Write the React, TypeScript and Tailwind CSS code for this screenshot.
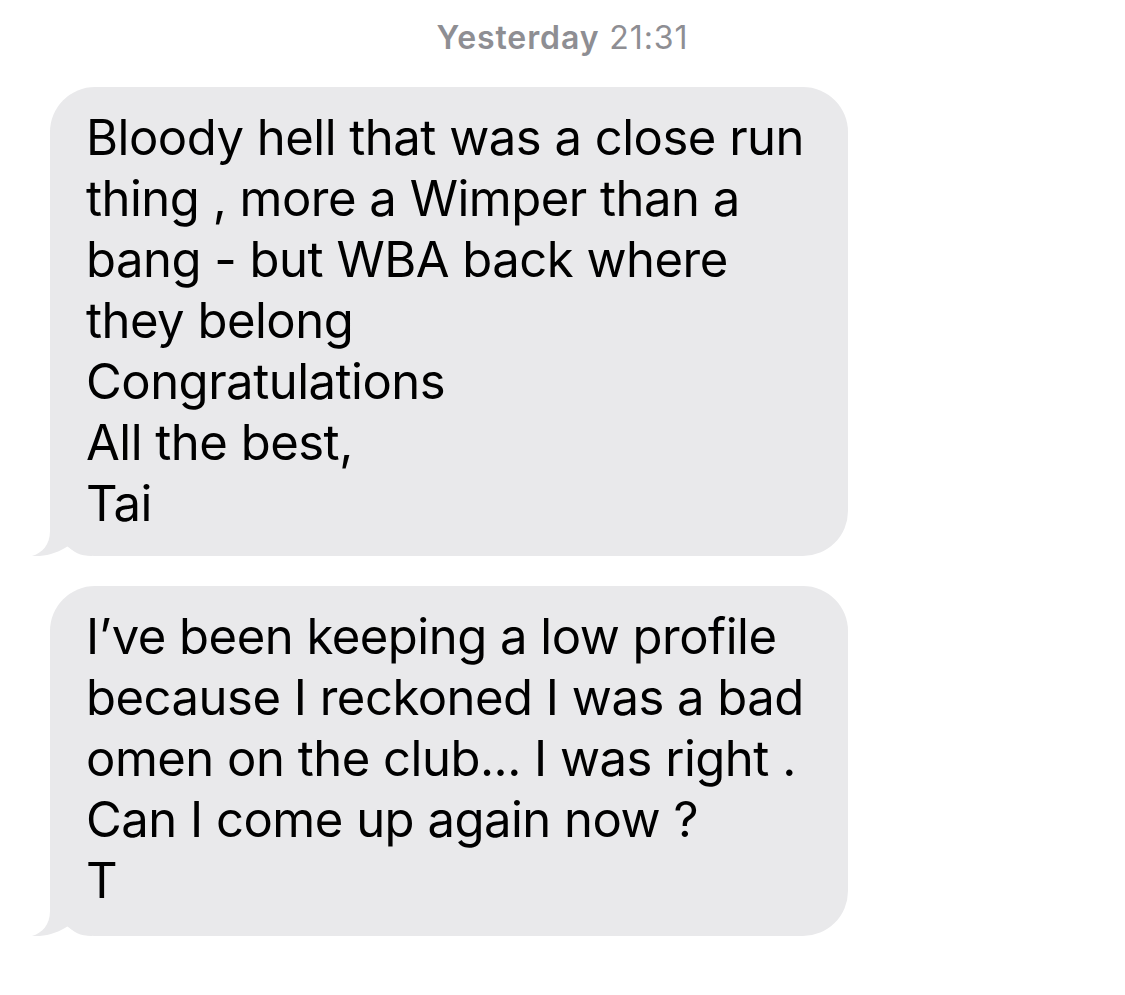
import React from 'react';

const messages: string[][] = [
  [
    'Bloody hell that was a close run',
    'thing , more a Wimper than a',
    'bang - but WBA back where',
    'they belong',
    'Congratulations',
    'All the best,',
    'Tai',
  ],
  [
    'I\u2019ve been keeping a low profile',
    'because I reckoned I was a bad',
    'omen on the club... I was right .',
    'Can I come up again now ?',
    'T',
  ],
];

function Tail() {
  return (
    <svg
      className="absolute left-[-18px] bottom-0"
      width="60"
      height="45"
      viewBox="0 0 60 45"
      aria-hidden
    >
      <path
        d="M18,0 L18,20 C18,34 10,42 0,45 C12,46 26,42 36,35 C41,41 48,45 60,45 L60,0 Z"
        fill="#e9e9eb"
      />
    </svg>
  );
}

function Bubble({ lines, last }: { lines: string[]; last?: boolean }) {
  return (
    <div
      className={
        'relative w-[798px] rounded-[45px] bg-[#e9e9eb] pl-[36px] pr-6 pt-[20px] ' +
        (last ? 'pb-[25px]' : 'pb-[22px]')
      }
    >
      <Tail />
      <div className="relative text-[49px] leading-[61px] text-black tracking-[-0.5px]">
        {lines.map((l, i) => (
          <div key={i} className="whitespace-nowrap">{l}</div>
        ))}
      </div>
    </div>
  );
}

export default function App() {
  return (
    <div
      className="w-[1125px] h-[995px] overflow-hidden bg-white"
      style={{ fontFamily: 'Inter, "Liberation Sans", sans-serif' }}
    >
      <div className="pt-[20px] text-center text-[32px] leading-[36px] text-[#8e8e93] tracking-[0.9px]">
        <span className="font-semibold">Yesterday</span> 21:31
      </div>
      <div className="mt-[31px] pl-[50px] flex flex-col gap-[30px]">
        {messages.map((m, i) => (
          <Bubble key={i} lines={m} last={i === messages.length - 1} />
        ))}
      </div>
    </div>
  );
}
